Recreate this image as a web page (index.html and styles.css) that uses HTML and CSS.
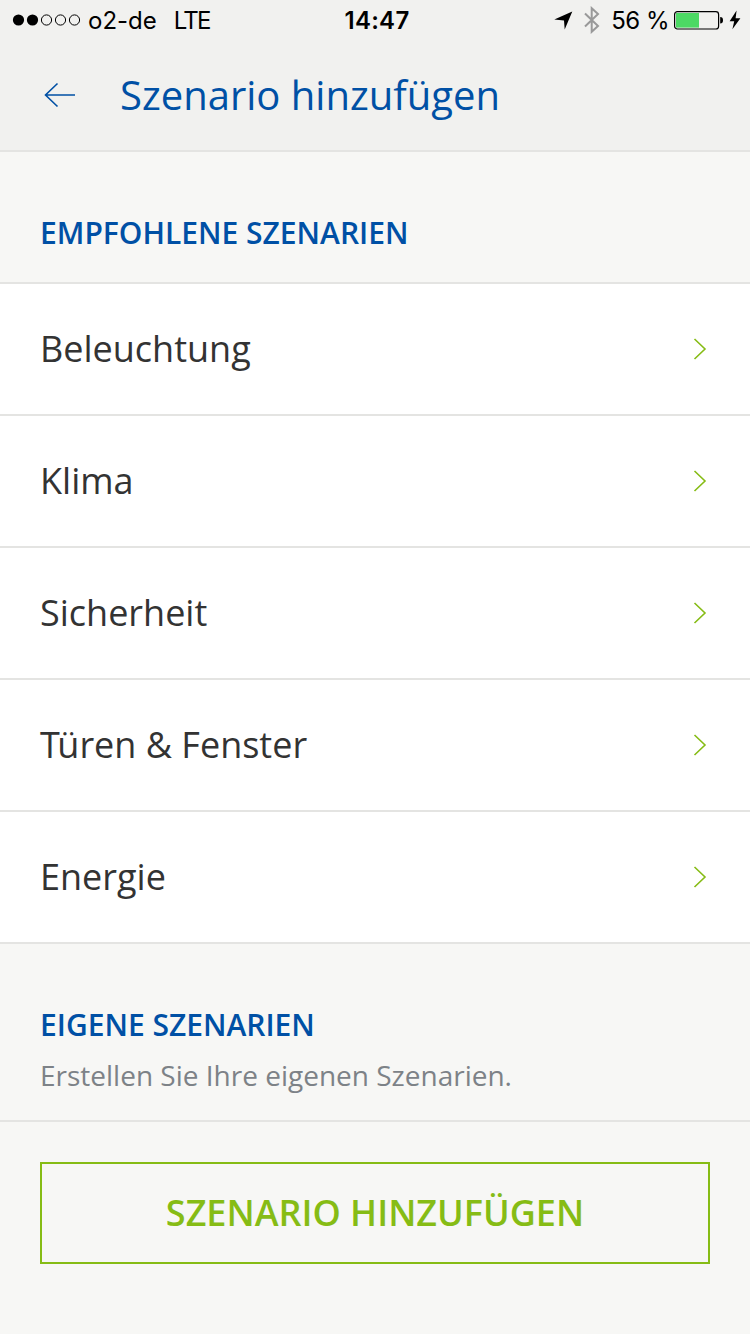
FILE: index.html
```
<!DOCTYPE html>
<html lang="de">
<head>
    <meta charset="utf-8">
    <title>Szenario hinzufügen</title>
    <link rel="stylesheet" href="styles.css">
</head>
<body>
    <header>
        <div class="status-bar">
            <div class="status-left">
                <svg class="signal" width="70" height="14" viewBox="0 0 70 14">
                    <circle cx="6.5" cy="7" r="5.6"/>
                    <circle cx="20.5" cy="7" r="5.6"/>
                    <circle class="empty" cx="34.5" cy="7" r="5.1"/>
                    <circle class="empty" cx="48.5" cy="7" r="5.1"/>
                    <circle class="empty" cx="62.5" cy="7" r="5.1"/>
                </svg>
                <span class="carrier">o2-de</span>
                <span class="network">LTE</span>
            </div>
            <div class="time">14:47</div>
            <div class="status-right">
                <svg class="location" width="20" height="20" viewBox="0 0 20 20">
                    <path d="M18.3 1.6 L0.3 9.4 L10 10.4 L10.7 19.4 Z"/>
                </svg>
                <svg class="bluetooth" width="18" height="28" viewBox="0 0 18 28">
                    <path d="M2 7.5 L15 20 L8.7 25.8 V2.2 L15 8 L2 20.5"/>
                </svg>
                <span class="percent">56 %</span>
                <svg class="battery" width="50" height="20" viewBox="0 0 50 20">
                    <rect class="frame" x="0.6" y="1.6" width="44" height="17.4" rx="2.8"/>
                    <rect class="level" x="2" y="3" width="23" height="14.6"/>
                    <path d="M46.2 7 Q49 7 49 10.3 Q49 13.6 46.2 13.6 Z"/>
                </svg>
                <svg class="charging" width="12" height="20" viewBox="0 0 12 20">
                    <path d="M7.6 0.5 L0.6 11.2 H5.2 L3.4 19.2 L11.4 8.2 H6.6 Z"/>
                </svg>
            </div>
        </div>
        <div class="title-bar">
            <svg class="back" width="32" height="26" viewBox="0 0 32 26">
                <path d="M13.5 1.5 L1.5 13 L13.5 24.5 M1.5 13 H31"/>
            </svg>
            <h1>Szenario hinzufügen</h1>
        </div>
    </header>

    <section class="section-head">
        <h2>EMPFOHLENE SZENARIEN</h2>
    </section>
    <ul class="list">
        <li><span>Beleuchtung</span><svg class="arrow" width="14" height="24" viewBox="0 0 14 24"><path d="M1.5 2 L12 12 L1.5 22"/></svg></li>
        <li><span>Klima</span><svg class="arrow" width="14" height="24" viewBox="0 0 14 24"><path d="M1.5 2 L12 12 L1.5 22"/></svg></li>
        <li><span>Sicherheit</span><svg class="arrow" width="14" height="24" viewBox="0 0 14 24"><path d="M1.5 2 L12 12 L1.5 22"/></svg></li>
        <li><span><span class="kern">T</span>üren &amp; Fenster</span><svg class="arrow" width="14" height="24" viewBox="0 0 14 24"><path d="M1.5 2 L12 12 L1.5 22"/></svg></li>
        <li><span>Energie</span><svg class="arrow" width="14" height="24" viewBox="0 0 14 24"><path d="M1.5 2 L12 12 L1.5 22"/></svg></li>
    </ul>

    <section class="section-head own">
        <h2>EIGENE SZENARIEN</h2>
        <p>Erstellen Sie Ihre eigenen Szenarien.</p>
    </section>
    <div class="actions">
        <button>SZENARIO HINZUFÜGEN</button>
    </div>
</body>
</html>
```

FILE: styles.css
```
* {
    box-sizing: border-box;
}
body {
    margin: 0;
    min-height: 1334px;
    background-color: #f7f7f5;
    color: #333;
    font-family: "Open Sans", sans-serif;
}
svg {
    display: block;
    flex: none;
}
h1, h2, p, ul {
    margin: 0;
    padding: 0;
}
header {
    height: 152px;
    background-color: #f1f1ef;
    border-bottom: 2px solid #e4e4e2;
}

/* status bar */
.status-bar {
    display: grid;
    grid-template-columns: 1fr auto 1fr;
    align-items: center;
    height: 40px;
    padding: 0 9px 0 12px;
    font-family: Inter, sans-serif;
    font-size: 24px;
    line-height: 38px;
    color: #000;
    white-space: nowrap;
}
.status-left, .status-right {
    display: flex;
    align-items: center;
}
.status-left span, .percent, .time {
    padding-top: 2px;
}
.status-right {
    justify-content: flex-end;
}
.signal .empty {
    fill: none;
    stroke: #000;
    stroke-width: 1;
}
.carrier {
    margin-left: 6px;
}
.network {
    margin-left: 17px;
    letter-spacing: -1.8px;
}
.time {
    padding-left: 1px;
    font-weight: 600;
    letter-spacing: 0.3px;
}
.bluetooth {
    margin: 0 10px 0 9px;
    fill: none;
    stroke: #999;
    stroke-width: 2;
}
.percent {
    letter-spacing: -0.5px;
}
.battery {
    margin: 0 5px 0 5px;
}
.battery .frame {
    fill: none;
    stroke: #000;
    stroke-width: 1.2;
}
.battery .level {
    fill: #4cd964;
}

/* title */
.title-bar {
    display: flex;
    align-items: center;
    height: 110px;
    padding-left: 44px;
}
.back {
    fill: none;
    stroke: #0050a5;
    stroke-width: 1.6;
}
h1 {
    margin-left: 44px;
    font-size: 40px;
    font-weight: 400;
    line-height: 54px;
    color: #0050a5;
}

.section-head {
    height: 132px;
    padding: 61px 40px 0;
    border-bottom: 2px solid #e4e4e2;
}
.section-head.own {
    height: 178px;
}
h2 {
    font-size: 30px;
    font-weight: 600;
    line-height: 40px;
    color: #0050a5;
}
.section-head p {
    margin-top: 11px;
    font-size: 28px;
    line-height: 38px;
    color: #7d8287;
}

.list {
    list-style: none;
}
.list li {
    display: flex;
    align-items: center;
    justify-content: space-between;
    height: 132px;
    padding: 0 43px 0 40px;
    background-color: #fff;
    border-bottom: 2px solid #e4e4e2;
    font-size: 36px;
}
.list li > span {
    padding-bottom: 2px;
}
.kern {
    letter-spacing: -2.5px;
}
.arrow {
    fill: none;
    stroke: #86bc15;
    stroke-width: 1.6;
}

.actions {
    padding: 40px;
}
button {
    display: block;
    width: 100%;
    height: 102px;
    padding: 0 0 2px;
    background: none;
    border: 2px solid #86bc15;
    font-family: inherit;
    font-size: 36px;
    font-weight: 600;
    color: #86bc15;
}
```
